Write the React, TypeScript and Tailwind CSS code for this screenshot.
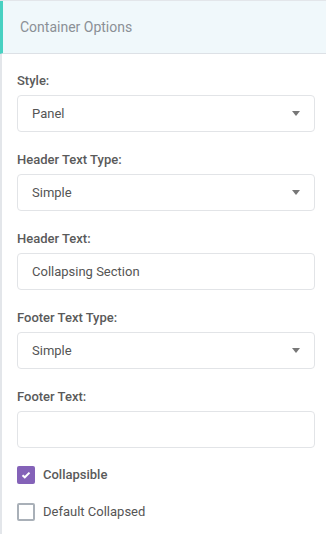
function Label({ children }: { children: React.ReactNode }) {
  return <div className="mb-[6px] h-4 text-[13px] font-medium leading-4 text-[#5a5a5a]">{children}</div>;
}

function SelectBox({ value }: { value: string }) {
  return (
    <div className="flex h-[37px] items-center justify-between rounded-[4px] border border-[#e2e4e7] bg-white pl-[14px] pr-[14px]">
      <span className="text-[13px] text-[#555]">{value}</span>
      <span className="h-0 w-0 border-x-[4px] border-t-[5px] border-x-transparent border-t-[#777]" />
    </div>
  );
}

function TextBox({ value }: { value?: string }) {
  return (
    <div className="flex h-[37px] items-center rounded-[4px] border border-[#e2e4e7] bg-white pl-[14px]">
      <span className="text-[13px] text-[#555]">{value}</span>
    </div>
  );
}

export default function App() {
  return (
    <div className="h-[534px] w-[326px] overflow-hidden border-t border-[#e3e6ea] bg-white font-['Roboto',sans-serif]">
      <div className="flex h-[53px] items-center border-b border-l-[3px] border-b-[#dde1e6] border-l-[#48d1c2] bg-[#f0f8fb] pl-[17px]">
        <span className="text-[14px] text-[#8b9096]">Container Options</span>
      </div>
      <div className="h-full border-l-2 border-[#e3e6ea] pl-[15px] pr-[11px] pt-[19px]">
        <div className="mb-[20px]">
          <Label>Style:</Label>
          <SelectBox value="Panel" />
        </div>
        <div className="mb-[20px]">
          <Label>Header Text Type:</Label>
          <SelectBox value="Simple" />
        </div>
        <div className="mb-[20px]">
          <Label>Header Text:</Label>
          <TextBox value="Collapsing Section" />
        </div>
        <div className="mb-[20px]">
          <Label>Footer Text Type:</Label>
          <SelectBox value="Simple" />
        </div>
        <div>
          <Label>Footer Text:</Label>
          <TextBox />
        </div>
        <div className="mt-[18px] flex h-[18px] items-center gap-2">
          <span className="flex h-[18px] w-[18px] items-center justify-center rounded-[2px] bg-[#8462b8]">
            <svg width="10" height="8" viewBox="0 0 10 8">
              <path d="M1.5 4.2 L3.8 6.3 L8.5 1.6" fill="none" stroke="#fff" strokeWidth="2" />
            </svg>
          </span>
          <span className="text-[13px] font-medium leading-[18px] text-[#5a5a5a]">Collapsible</span>
        </div>
        <div className="mt-[19px] flex h-[18px] items-center gap-2">
          <span className="h-[18px] w-[18px] rounded-[2px] border-2 border-[#a9b0b8] bg-white" />
          <span className="text-[13px] leading-[18px] text-[#555]">Default Collapsed</span>
        </div>
      </div>
    </div>
  );
}
